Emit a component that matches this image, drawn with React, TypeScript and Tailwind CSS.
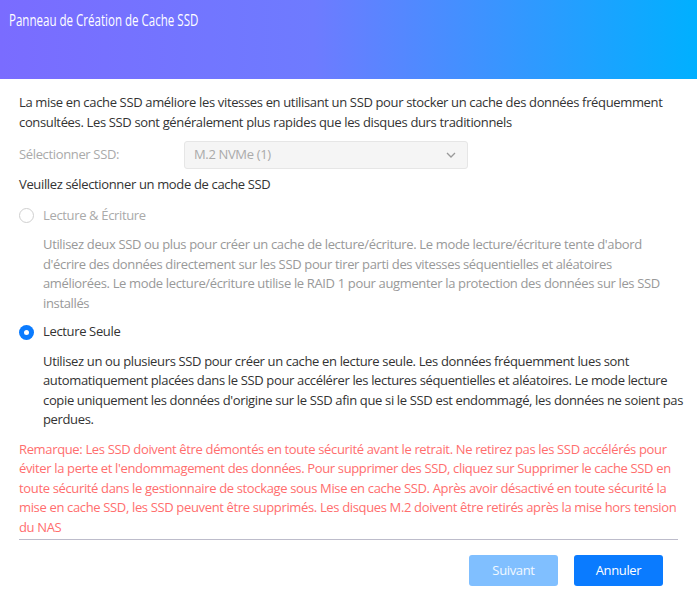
import React from "react";

const font = { fontFamily: '"Open Sans", "Noto Sans", sans-serif' };

function Lines({ lines }: { lines: string[] }) {
  return (
    <>
      {lines.map((l, i) => (
        <span key={i} className="block whitespace-nowrap">
          {l}
        </span>
      ))}
    </>
  );
}

export default function App() {
  return (
    <div
      className="w-[697px] h-[599px] overflow-hidden bg-white text-[13px] tracking-[-0.35px]"
      style={font}
    >
      <div className="h-[79px] bg-[linear-gradient(90deg,#7a6cff_0%,#6e7bff_45%,#00b0ff_100%)] px-[9px] pt-[9px]">
        <h1 className="inline-block origin-left scale-x-[0.745] whitespace-nowrap text-[15.5px] leading-[22px] tracking-[0px] text-white">
          Panneau de Création de Cache SSD
        </h1>
      </div>

      <div className="px-[19px] pt-[14px]">
        <p className="leading-[19.5px] text-[#333]">
          <Lines
            lines={[
              "La mise en cache SSD améliore les vitesses en utilisant un SSD pour stocker un cache des données fréquemment",
              "consultées. Les SSD sont généralement plus rapides que les disques durs traditionnels",
            ]}
          />
        </p>

        <div className="mt-[9px] flex items-center">
          <span className="w-[165px] text-[#aaa]">Sélectionner SSD:</span>
          <div className="flex h-[28px] w-[284px] items-center justify-between rounded-[3px] border border-[#e6e6e6] bg-[#f5f5f5] pl-[9px] pr-[11px]">
            <span className="text-[#aaa]">M.2 NVMe (1)</span>
            <svg width="10" height="6" viewBox="0 0 10 6" fill="none">
              <path d="M1 1l4 4 4-4" stroke="#999" strokeWidth="1.3" />
            </svg>
          </div>
        </div>

        <p className="mt-[6px] leading-[19.5px] text-[#333]">
          Veuillez sélectionner un mode de cache SSD
        </p>

        <div className="mt-[11px] flex h-[20px] items-center gap-[9px]">
          <span className="h-[15px] w-[15px] rounded-full border-[1.5px] border-[#cfcfcf] bg-white" />
          <span className="text-[#aaa]">Lecture &amp; Écriture</span>
        </div>

        <p className="mt-[9.5px] pl-[24px] leading-[19.5px] text-[#999]">
          <Lines
            lines={[
              "Utilisez deux SSD ou plus pour créer un cache de lecture/écriture. Le mode lecture/écriture tente d'abord",
              "d'écrire des données directement sur les SSD pour tirer parti des vitesses séquentielles et aléatoires",
              "améliorées. Le mode lecture/écriture utilise le RAID 1 pour augmenter la protection des données sur les SSD",
              "installés",
            ]}
          />
        </p>

        <div className="mt-[9px] flex h-[20px] items-center gap-[9px]">
          <span className="flex h-[15px] w-[15px] items-center justify-center rounded-full bg-[#0a7bff]">
            <span className="h-[5px] w-[5px] rounded-full bg-white" />
          </span>
          <span className="text-[#333]">Lecture Seule</span>
        </div>

        <p className="mt-[9.5px] pl-[24px] leading-[19.5px] text-[#333]">
          <Lines
            lines={[
              "Utilisez un ou plusieurs SSD pour créer un cache en lecture seule. Les données fréquemment lues sont",
              "automatiquement placées dans le SSD pour accélérer les lectures séquentielles et aléatoires. Le mode lecture",
              "copie uniquement les données d'origine sur le SSD afin que si le SSD est endommagé, les données ne soient pas",
              "perdues.",
            ]}
          />
        </p>

        <p className="mt-[10px] border-b border-[#bdbccb] pb-[2px] leading-[19.5px] text-[#ff6e6e]">
          <Lines
            lines={[
              "Remarque: Les SSD doivent être démontés en toute sécurité avant le retrait. Ne retirez pas les SSD accélérés pour",
              "éviter la perte et l'endommagement des données. Pour supprimer des SSD, cliquez sur Supprimer le cache SSD en",
              "toute sécurité dans le gestionnaire de stockage sous Mise en cache SSD. Après avoir désactivé en toute sécurité la",
              "mise en cache SSD, les SSD peuvent être supprimés. Les disques M.2 doivent être retirés après la mise hors tension",
              "du NAS",
            ]}
          />
        </p>

        <div className="mt-[15px] flex justify-end gap-[16px] pr-[15px]">
          <button className="h-[31px] w-[89px] rounded-[3px] bg-[#80bfff] text-[13px] text-white/90">
            Suivant
          </button>
          <button className="h-[31px] w-[89px] rounded-[3px] bg-[#0a7bff] text-[13px] text-white">
            Annuler
          </button>
        </div>
      </div>
    </div>
  );
}
